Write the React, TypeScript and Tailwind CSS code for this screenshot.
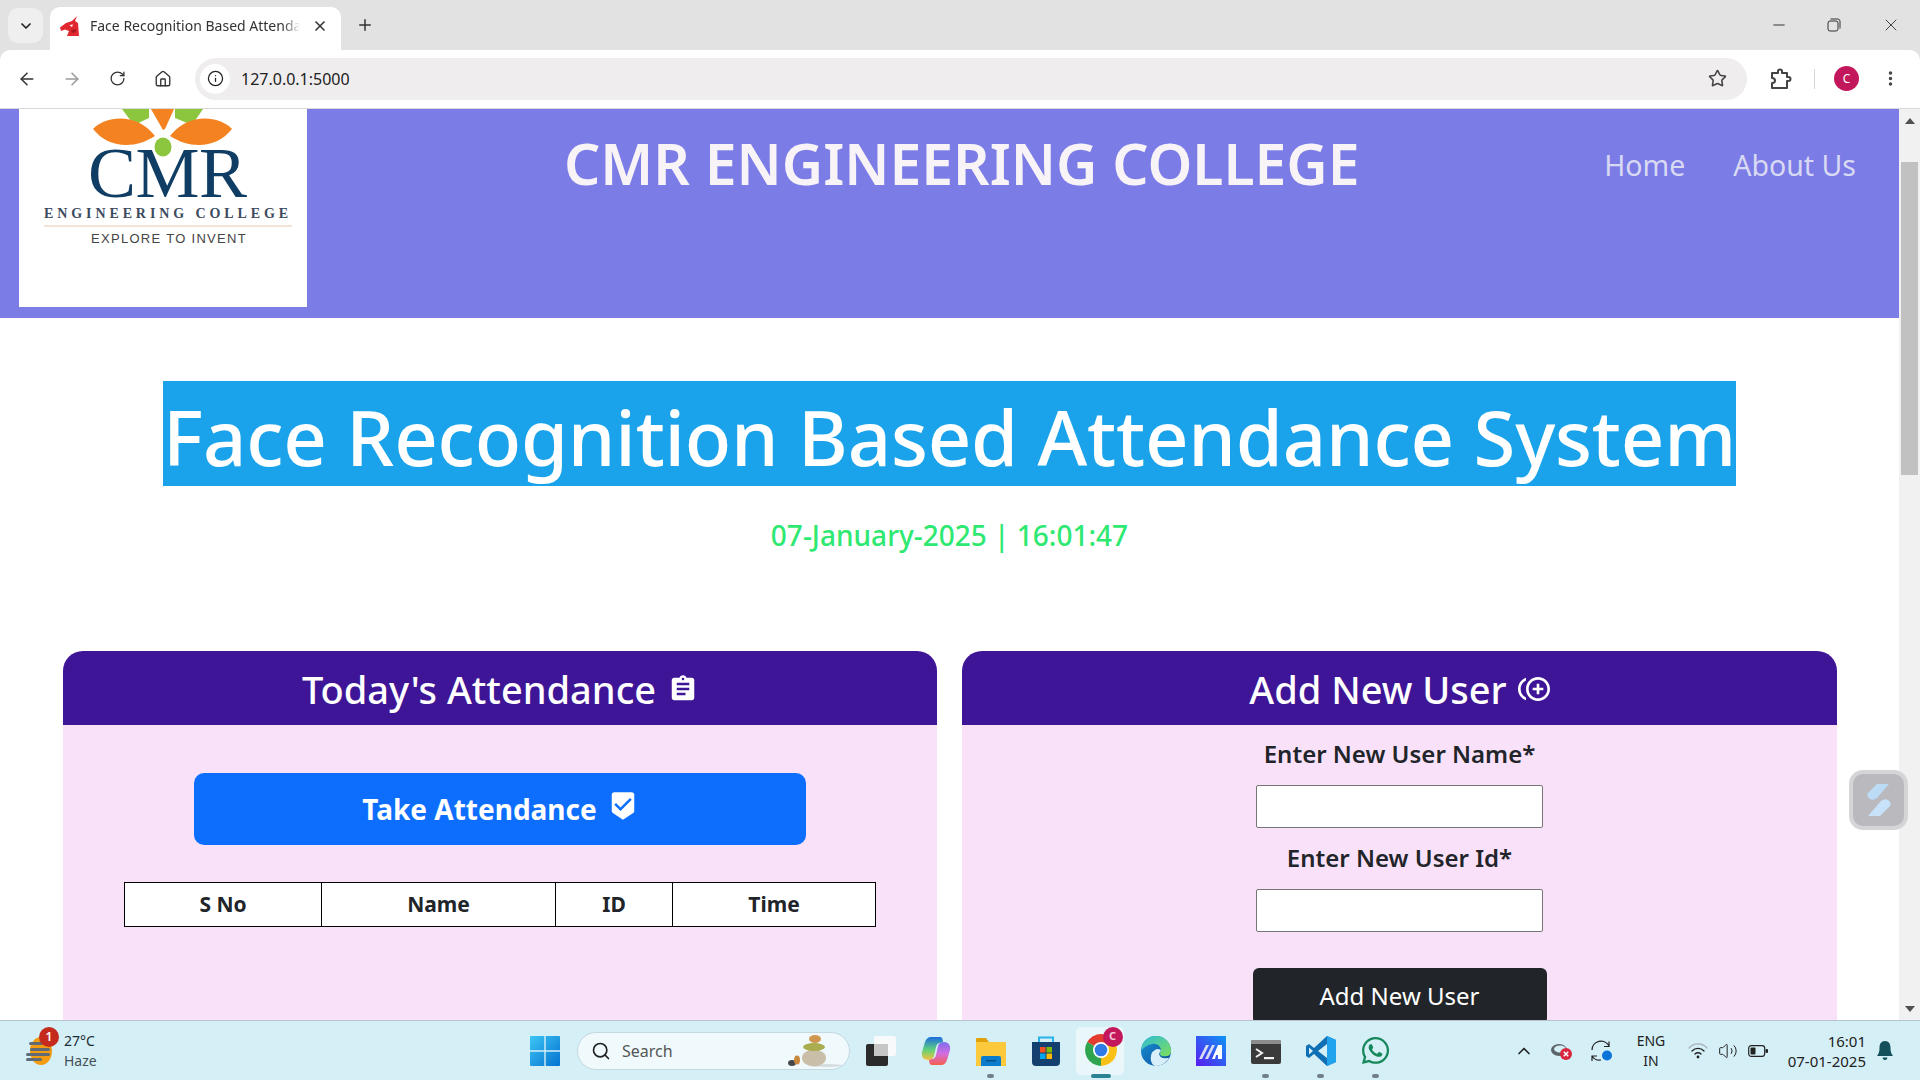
import { ArrowLeft, ArrowRight, RotateCw, Home, Info, Star, MoreVertical, X, Plus, ChevronDown, Minus, ChevronUp, Search, Volume2 } from "lucide-react";
import { MdAssignment, MdBeenhere, MdControlPointDuplicate } from "react-icons/md";
import { FaWhatsapp } from "react-icons/fa";

const sans = "font-['Noto_Sans','Open_Sans',sans-serif]";

const TabFavicon = () => (
  <svg width="20" height="20" viewBox="0 0 20 20">
    <path d="M17 0 L15 5 L18 7 L19 20 L7 20 L9 15 L5 13.5 L1 15 L0 11.5 L6 7 L12 5 Z" fill="#e0282e" />
    <path d="M9.5 9 L13 8.5 L12 11 Z" fill="#fff" />
    <path d="M11 14 L16 13 L16 16 L12 17 Z" fill="#a81a20" />
  </svg>
);

const ExtensionsIcon = () => (
  <svg width="22" height="22" viewBox="0 0 22 22" fill="none" stroke="#444" strokeWidth="2" strokeLinejoin="round">
    <path d="M2 5 H8 V3 Q8 1.5 10 1.5 Q12 1.5 12 3 V5 H17 V9 H18.5 Q20.5 9 20.5 11 Q20.5 13 18.5 13 H17 V20 H2 V15 Q5 15 5 12.5 Q5 10 2 10 Z" />
  </svg>
);

const BrowserChrome = () => (
  <div className="bg-[#e2e2e2] shrink-0">
    <div className="flex items-start h-[50px] pt-[7px]">
      <div className="ml-2 mt-px w-[35px] h-[35px] rounded-[10px] bg-[#efefef] flex items-center justify-center">
        <ChevronDown size={16} strokeWidth={2.5} color="#222" />
      </div>
      <div className="ml-[7px] w-[291px] h-[43px] bg-white rounded-t-[10px] flex items-center pl-[10px] pb-[6px]">
        <TabFavicon />
        <span className="ml-[10px] w-[210px] overflow-hidden whitespace-nowrap text-[14px] text-[#333] [mask-image:linear-gradient(to_right,black_92%,transparent)]">
          Face Recognition Based Attendance System
        </span>
        <X size={16} strokeWidth={2.5} color="#333" className="ml-[12px]" />
      </div>
      <Plus size={18} strokeWidth={2} color="#333" className="ml-[15px] mt-[9px]" />
      <div className="ml-auto flex items-center mt-[8px] text-[#222]">
        <Minus size={18} strokeWidth={1.2} className="mr-[39px]" />
        <svg width="14" height="14" viewBox="0 0 14 14" fill="none" stroke="#333" strokeWidth="1" className="mr-[40px]">
          <rect x="1" y="3" width="10" height="10" rx="2" />
          <path d="M3.5 1 H11 A2.5 2.5 0 0 1 13 3 V10.5" />
        </svg>
        <X size={20} strokeWidth={1} className="mr-[19px]" />
      </div>
    </div>
    <div className="h-[59px] bg-white rounded-t-[10px] border-b border-[#d9d9d9] flex items-center pb-px">
      <ArrowLeft size={20} strokeWidth={1.8} color="#333" className="ml-[17px]" />
      <ArrowRight size={20} strokeWidth={1.8} color="#9a9a9a" className="ml-[25px]" />
      <RotateCw size={17} strokeWidth={1.8} color="#333" className="ml-[27px]" />
      <Home size={18} strokeWidth={1.8} color="#333" className="ml-[28px]" />
      <div className="ml-[23px] w-[1552px] h-[42px] rounded-full bg-[#efedee] flex items-center pl-[5px] pr-[20px]">
        <div className="w-[30px] h-[30px] rounded-full bg-white flex items-center justify-center">
          <Info size={17} strokeWidth={1.8} color="#222" />
        </div>
        <span className="ml-[11px] text-[16px] text-[#222]">127.0.0.1:5000</span>
        <Star size={19} strokeWidth={2} color="#444" className="ml-auto" />
      </div>
      <div className="ml-[23px]"><ExtensionsIcon /></div>
      <div className="ml-[22px] w-px h-5 bg-[#d5d5d5]" />
      <div className="ml-[19px] w-[25px] h-[25px] rounded-full bg-[#c2185b] text-white text-[12px] flex items-center justify-center">C</div>
      <MoreVertical size={19} strokeWidth={2.4} color="#444" className="ml-[22px]" />
    </div>
  </div>
);

const CmrLogo = () => (
  <svg width="288" height="198" viewBox="0 0 288 198" className="block">
    <path d="M103 0 L130 0 L130 9 L115 16 Z" fill="#8cc63f" />
    <path d="M156 0 L184 0 L173 16 L156 9 Z" fill="#8cc63f" />
    <path d="M132 0 L155 0 L146 20 L144 21 Z" fill="#f58220" />
    <path d="M74 20 C88 6 118 4 136 27 C116 40 90 40 74 20 Z" fill="#f58220" />
    <path d="M213 20 C199 6 169 4 151 27 C171 40 197 40 213 20 Z" fill="#f58220" />
    <ellipse cx="144" cy="38" rx="8.5" ry="9.5" fill="#8cc63f" />
    <text x="69" y="88" fontFamily="'Liberation Serif', serif" fontSize="72" fill="#0f3d63" letterSpacing="-0.5">CMR</text>
    <text x="25" y="109" fontFamily="'Liberation Serif', serif" fontSize="14" fontWeight="700" fill="#3c4a5e" letterSpacing="3.9">ENGINEERING COLLEGE</text>
    <rect x="25" y="116" width="248" height="2" fill="#f5e3d3" />
    <text x="72" y="134" fontFamily="'Liberation Sans', sans-serif" fontSize="13" fill="#444" letterSpacing="1.3">EXPLORE TO INVENT</text>
  </svg>
);

const Header = () => (
  <div className={`h-[209px] shrink-0 bg-[#7b7ce6] flex items-start pl-[19px] pr-[43px] ${sans}`}>
    <div className="w-[288px] h-[198px] bg-white shrink-0">
      <CmrLogo />
    </div>
    <div className="ml-[257px] mt-[15px] text-[57px] leading-[78px] font-semibold text-[#f8f3f7] whitespace-nowrap">
      CMR ENGINEERING COLLEGE
    </div>
    <div className="ml-auto mt-[34px] flex gap-[48px] text-[28.5px] leading-[44px] text-[#d8d9f3]">
      <span>Home</span>
      <span>About Us</span>
    </div>
  </div>
);

const AttendanceCard = () => (
  <div className="w-[874px] shrink-0 flex flex-col bg-[#f9e2f9] rounded-t-[20px] overflow-hidden">
    <div className="h-[74px] pt-[2px] bg-[#3e1596] text-white flex items-center justify-center gap-[12px]">
      <span className="text-[38px] font-medium">Today's Attendance</span>
      <MdAssignment size={30} />
    </div>
    <div className="flex-1 flex flex-col items-center">
      <div className="mt-[48px] w-[612px] h-[72px] shrink-0 rounded-[10px] bg-[#0d6efd] text-white flex items-center justify-center gap-[11px]">
        <span className="text-[28px] font-bold">Take Attendance</span>
        <MdBeenhere size={30} className="-mt-[6px]" />
      </div>
      <table className="mt-[37px] w-[752px] h-[45px] table-fixed bg-white border-collapse text-[21px] font-bold text-[#212529]">
        <thead>
          <tr>
            <th className="w-[197px] border border-black font-bold">S No</th>
            <th className="w-[234px] border border-black font-bold">Name</th>
            <th className="w-[117px] border border-black font-bold">ID</th>
            <th className="border border-black font-bold">Time</th>
          </tr>
        </thead>
      </table>
    </div>
  </div>
);

const AddUserCard = () => (
  <div className="flex-1 flex flex-col bg-[#f9e2f9] rounded-t-[20px] overflow-hidden">
    <div className="h-[74px] pt-[2px] bg-[#3e1596] text-white flex items-center justify-center gap-[11px]">
      <span className="text-[38px] font-medium">Add New User</span>
      <MdControlPointDuplicate size={32} />
    </div>
    <div className="flex-1 flex flex-col items-center text-[#212529]">
      <label className="mt-[11px] h-[36px] leading-[36px] text-[24px] font-semibold">Enter New User Name*</label>
      <input className="mt-[13px] w-[287px] h-[43px] shrink-0 bg-white border border-[#767676] rounded-[2px]" />
      <label className="mt-[12px] h-[36px] leading-[36px] text-[24px] font-semibold">Enter New User Id*</label>
      <input className="mt-[13px] w-[287px] h-[43px] shrink-0 bg-white border border-[#767676] rounded-[2px]" />
      <button className="mt-[36px] w-[294px] h-[56px] shrink-0 rounded-[6px] bg-[#212529] text-white text-[24px]">Add New User</button>
    </div>
  </div>
);

const Scrollbar = () => (
  <div className="w-[21px] shrink-0 bg-[#f1f1f1] flex flex-col items-center">
    <svg width="10" height="6" viewBox="0 0 10 6" className="mt-[9px]"><path d="M0 6 L5 0 L10 6 Z" fill="#505050" /></svg>
    <div className="mt-[38px] w-[17px] h-[313px] bg-[#c1c1c1]" />
    <svg width="10" height="6" viewBox="0 0 10 6" className="mt-auto mb-[8px]"><path d="M0 0 L5 6 L10 0 Z" fill="#505050" /></svg>
  </div>
);

const Page = () => (
  <div className="flex-1 min-h-0 flex relative overflow-hidden bg-white">
    <div className={`flex-1 flex flex-col ${sans}`}>
      <Header />
      <div className="flex flex-col items-center shrink-0">
        <h1 className="mt-[63px] h-[105px] leading-[112px] bg-[#1aa3ea] text-white text-[76px] font-medium tracking-[-0.2px] whitespace-nowrap">
          Face Recognition Based Attendance System
        </h1>
        <div className="mt-[29px] text-[28px] leading-[40px] font-medium text-[#2fe871]">07-January-2025 | 16:01:47</div>
      </div>
      <div className="mt-[96px] flex-1 flex gap-[25px] pl-[63px] pr-[62px]">
        <AttendanceCard />
        <AddUserCard />
      </div>
    </div>
    <Scrollbar />
    <div className="absolute left-[1849px] top-[661px] w-[59px] h-[60px] rounded-[14px] bg-[#d5d5d8] p-[4px]">
      <div className="w-full h-full rounded-[10px] bg-[#b9b9be] flex items-center justify-center">
        <svg width="30" height="34" viewBox="0 0 30 34">
          <path d="M13 1 H25 L13 15 Q9 18 6 16 Q2 13 4 10 Z" fill="#bcdcf6" />
          <path d="M17 18 Q21 15 24 17 Q28 20 26 23 L16 33 H4 Z" fill="#c8e2f9" />
        </svg>
      </div>
    </div>
  </div>
);

const WeatherIcon = () => (
  <div className="relative w-[30px] h-[30px]">
    <svg width="30" height="30" viewBox="0 0 30 30">
      <ellipse cx="16" cy="15" rx="11" ry="14" fill="#f39c12" />
      <rect x="4" y="6" width="14" height="3" rx="1.5" fill="#5f6b75" />
      <rect x="5" y="12" width="20" height="3" rx="1.5" fill="#5f6b75" />
      <rect x="1" y="17" width="24" height="3" rx="1.5" fill="#5f6b75" />
      <rect x="1" y="22" width="16" height="3" rx="1.5" fill="#5f6b75" />
    </svg>
    <span className="absolute -top-[9px] left-[14px] w-[20px] h-[20px] rounded-full bg-[#c42b1c] text-white text-[12px] font-semibold flex items-center justify-center">1</span>
  </div>
);

const WinLogo = () => (
  <svg width="30" height="30" viewBox="0 0 30 30">
    <defs>
      <linearGradient id="win" x1="0" y1="0" x2="1" y2="1">
        <stop offset="0" stopColor="#3cc6f5" />
        <stop offset="1" stopColor="#0572d0" />
      </linearGradient>
    </defs>
    <path d="M0 1 a1 1 0 0 1 1 -1 H14.3 V14.3 H0 Z M15.7 0 H29 a1 1 0 0 1 1 1 V14.3 H15.7 Z M0 15.7 H14.3 V30 H1 a1 1 0 0 1 -1 -1 Z M15.7 15.7 H30 V29 a1 1 0 0 1 -1 1 H15.7 Z" fill="url(#win)" />
  </svg>
);

const Stones = () => (
  <svg width="56" height="38" viewBox="0 0 56 38">
    <ellipse cx="40" cy="33.5" rx="15" ry="1.5" fill="#d5dcdf" />
    <ellipse cx="5" cy="31" rx="4" ry="3" fill="#44474a" />
    <ellipse cx="10" cy="28" rx="3" ry="4.5" fill="#c8893f" />
    <ellipse cx="27" cy="26" rx="12" ry="8.5" fill="#c9bfa9" />
    <ellipse cx="27" cy="15" rx="11" ry="4" fill="#a9ad4e" />
    <ellipse cx="28" cy="7" rx="6" ry="4" fill="#cf9650" />
  </svg>
);

const TaskView = () => (
  <svg width="30" height="30" viewBox="0 0 30 30">
    <rect x="0" y="8" width="22" height="22" rx="2" fill="#2b2b2b" />
    <rect x="8" y="0" width="22" height="20" rx="2" fill="#f7f9fa" />
    <rect x="8" y="8" width="14" height="12" fill="#c6c6c6" />
  </svg>
);

const Copilot = () => (
  <svg width="30" height="30" viewBox="0 0 30 30">
    <defs>
      <linearGradient id="cop1" x1="0" y1="0" x2="0" y2="1">
        <stop offset="0" stopColor="#1d6ce0" />
        <stop offset="0.55" stopColor="#5fd27b" />
        <stop offset="1" stopColor="#f6c23c" />
      </linearGradient>
      <linearGradient id="cop2" x1="0" y1="0" x2="0" y2="1">
        <stop offset="0" stopColor="#7b6ff0" />
        <stop offset="0.5" stopColor="#d36ce0" />
        <stop offset="1" stopColor="#f5604c" />
      </linearGradient>
    </defs>
    <path d="M10 1 H19 C21 1 22 3 22 6 L19 7 C17 7 16 8 15 11 L13 20 C12 23 10 24 7 24 C3 24 0 21 1 16 L4 6 C5 3 7 1 10 1 Z" fill="url(#cop1)" />
    <path d="M20 29 H11 C9 29 8 27 8 24 L11 23 C13 23 14 22 15 19 L17 10 C18 7 20 6 23 6 C27 6 30 9 29 14 L26 24 C25 27 23 29 20 29 Z" fill="url(#cop2)" />
  </svg>
);

const Explorer = () => (
  <svg width="30" height="30" viewBox="0 0 30 30">
    <path d="M0 3 a1 1 0 0 1 1 -1 H10 L13 6 H30 V30 H0 Z" fill="#e0a008" />
    <rect x="0" y="6" width="30" height="24" fill="#fcc93c" />
    <path d="M5 22 a2 2 0 0 1 2 -2 H23 a2 2 0 0 1 2 2 V30 H5 Z" fill="#0a7ccb" />
    <rect x="10" y="24" width="10" height="1.5" fill="#054e86" />
  </svg>
);

const StoreIcon = () => (
  <svg width="30" height="30" viewBox="0 0 30 30">
    <path d="M8 6 V1.5 H22 V6" fill="none" stroke="#2ab2ea" strokeWidth="2" />
    <path d="M1 6 H29 V26 a4 4 0 0 1 -4 4 H5 a4 4 0 0 1 -4 -4 Z" fill="#14406f" />
    <rect x="9" y="11" width="5.5" height="5.5" fill="#f25022" />
    <rect x="15.5" y="11" width="5.5" height="5.5" fill="#7fba00" />
    <rect x="9" y="17.5" width="5.5" height="5.5" fill="#00a4ef" />
    <rect x="15.5" y="17.5" width="5.5" height="5.5" fill="#ffb900" />
  </svg>
);

const ChromeIcon = () => (
  <div className="relative w-[32px] h-[32px]">
    <svg width="32" height="32" viewBox="0 0 32 32">
      <path d="M16 16 L2.2 8 A16 16 0 0 1 29.8 8 Z" fill="#e33b2e" />
      <path d="M16 16 L29.8 8 A16 16 0 0 1 16 32 Z" fill="#f9c016" />
      <path d="M16 16 L16 32 A16 16 0 0 1 2.2 8 Z" fill="#2ea44f" />
      <circle cx="16" cy="16" r="8" fill="#fff" />
      <circle cx="16" cy="16" r="6.3" fill="#2f7ae5" />
    </svg>
    <span className="absolute -top-[7px] -right-[6px] w-[20px] h-[20px] rounded-full bg-[#c2185b] text-[#f6c9da] text-[11px] font-bold flex items-center justify-center">C</span>
  </div>
);

const EdgeIcon = () => (
  <svg width="30" height="30" viewBox="0 0 30 30">
    <defs>
      <linearGradient id="edg1" x1="0" y1="0" x2="1" y2="1">
        <stop offset="0" stopColor="#2dbcd6" />
        <stop offset="1" stopColor="#7fe05a" />
      </linearGradient>
      <linearGradient id="edg2" x1="0" y1="0" x2="1" y2="1">
        <stop offset="0" stopColor="#1b93d6" />
        <stop offset="1" stopColor="#0a4e9c" />
      </linearGradient>
    </defs>
    <circle cx="15" cy="15" r="15" fill="url(#edg2)" />
    <path d="M1 10 C3 3 9 0 15 0 C24 0 30 7 30 15 C30 20 25 21 21 20 C18 19 19 16 20 15 C20 10 16 7 11 8 C6 9 3 11 1 14 Z" fill="url(#edg1)" />
    <path d="M14 14 C16 12 20 13 20 15 C17 17 18 21 22 22 C25 22.5 27 22 28 22 C25 27 20 30 15 30 C11 30 9 24 10 20 C10 17 12 15 14 14 Z" fill="#d8eef8" />
  </svg>
);

const MaIcon = () => (
  <svg width="30" height="30" viewBox="0 0 30 30">
    <defs>
      <linearGradient id="ma" x1="1" y1="0" x2="0" y2="1">
        <stop offset="0" stopColor="#0d95f5" />
        <stop offset="1" stopColor="#5a1cf0" />
      </linearGradient>
    </defs>
    <rect width="30" height="30" fill="url(#ma)" />
    <path d="M3 23 L10 9 H13 L6 23 Z M9 23 L16 9 H19 L12 23 Z" fill="#d7dcf5" />
    <path d="M16 23 L22 9 H26 V23 H22 V19 H20 L19 23 Z" fill="#fff" />
  </svg>
);

const TerminalIcon = () => (
  <svg width="30" height="30" viewBox="0 0 30 30">
    <rect x="0" y="4" width="30" height="24" rx="2" fill="#3a3a3a" />
    <path d="M0 6 a2 2 0 0 1 2 -2 H28 a2 2 0 0 1 2 2 V8 H0 Z" fill="#8c8c8c" />
    <path d="M5 13 L11 17 L5 21" fill="none" stroke="#f2f2f2" strokeWidth="2" />
    <rect x="13" y="21" width="10" height="2.2" fill="#f2f2f2" />
  </svg>
);

const VsCode = () => (
  <svg width="30" height="30" viewBox="0 0 30 30">
    <path d="M21 0 L30 4 V26 L21 30 L8 18 L3 22 L0 20 V10 L3 8 L8 12 Z" fill="#0f6fb5" />
    <path d="M21 0 L30 4 V26 L21 30 Z" fill="#22a4ec" />
    <path d="M21 8 L12 15 L21 22 Z" fill="#d5eff7" />
    <path d="M3 11.5 V18.5 L7 15 Z" fill="#d5eff7" />
  </svg>
);

const AppSlot = ({ children, dot }: { children: React.ReactNode; dot?: boolean }) => (
  <div className="relative w-[55px] h-[60px] flex items-center justify-center">
    {children}
    {dot && <span className="absolute bottom-[3px] w-[7px] h-[4px] rounded-full bg-[#70808a]" />}
  </div>
);

const Taskbar = () => (
  <div className="h-[60px] shrink-0 bg-[#d5eff7] border-t border-[#b5c3cf] flex items-center font-['Noto_Sans',sans-serif] text-[#1c2b33]">
    <div className="ml-[25px] w-[30px]">
      <WeatherIcon />
    </div>
    <div className="ml-[9px] w-[60px] text-[14px] leading-[20px]">
      <div>27°C</div>
      <div className="text-[#444f56]">Haze</div>
    </div>
    <div className="ml-[406px]">
      <WinLogo />
    </div>
    <div className="ml-[17px] w-[273px] h-[38px] rounded-full bg-[#f0f9fc] border border-[#c5d8e0] flex items-center pl-[13px] pr-[6px]">
      <Search size={20} strokeWidth={2} color="#222" />
      <span className="ml-[11px] text-[16px] text-[#555]">Search</span>
      <div className="ml-auto">
        <Stones />
      </div>
    </div>
    <div className="ml-[3px] flex items-center">
      <AppSlot><TaskView /></AppSlot>
      <AppSlot><Copilot /></AppSlot>
      <AppSlot dot><Explorer /></AppSlot>
      <AppSlot><StoreIcon /></AppSlot>
      <div className="relative w-[55px] h-[60px] flex items-center justify-center">
        <div className="absolute left-[3px] top-[6px] w-[48px] h-[48px] rounded-[5px] bg-[#e9f7fb]" />
        <div className="relative -mt-[2px]"><ChromeIcon /></div>
        <span className="absolute bottom-[3px] w-[20px] h-[4px] rounded-full bg-[#2a8293]" />
      </div>
      <AppSlot><EdgeIcon /></AppSlot>
      <AppSlot><MaIcon /></AppSlot>
      <AppSlot dot><TerminalIcon /></AppSlot>
      <AppSlot dot><VsCode /></AppSlot>
      <AppSlot dot><FaWhatsapp size={31} color="#16875a" /></AppSlot>
    </div>
    <ChevronUp size={20} strokeWidth={2} color="#222" className="ml-[111px]" />
    <svg width="22" height="20" viewBox="0 0 22 20" className="ml-[17px]">
      <ellipse cx="8" cy="9" rx="8" ry="6" fill="#5d6468" />
      <ellipse cx="9" cy="8" rx="6" ry="3.5" fill="#d5eff7" />
      <circle cx="15" cy="13" r="6" fill="#d7263d" />
      <path d="M12.8 10.8 L17.2 15.2 M17.2 10.8 L12.8 15.2" stroke="#fff" strokeWidth="1.5" />
    </svg>
    <svg width="22" height="22" viewBox="0 0 22 22" className="ml-[18px]">
      <path d="M1 10 A9 9 0 0 1 18 6 M18 1.5 V6.5 H13" fill="none" stroke="#222" strokeWidth="1.2" />
      <path d="M1 21 V16 H6 M1 16 A9 9 0 0 0 10 20" fill="none" stroke="#222" strokeWidth="1.2" />
      <circle cx="16" cy="15.5" r="5" fill="#0a74da" />
    </svg>
    <div className="ml-[19px] w-[38px] text-center text-[14px] leading-[20px] text-[#222]">
      <div>ENG</div>
      <div>IN</div>
    </div>
    <svg width="20" height="18" viewBox="0 0 20 18" fill="none" strokeLinecap="round" className="ml-[18px]">
      <path d="M1 6 A12 12 0 0 1 19 6" stroke="#a4b1b7" strokeWidth="1.2" />
      <path d="M4 9 A8 8 0 0 1 16 9" stroke="#222" strokeWidth="1.3" />
      <path d="M7 12 A4.2 4.2 0 0 1 13 12" stroke="#222" strokeWidth="1.3" />
      <circle cx="10" cy="15" r="1.4" fill="#222" />
    </svg>
    <Volume2 size={20} strokeWidth={1.2} color="#222" className="ml-[10px]" />
    <svg width="20" height="14" viewBox="0 0 20 14" fill="none" className="ml-[10px]">
      <rect x="0.7" y="1.7" width="16" height="10.6" rx="2.5" stroke="#222" strokeWidth="1.2" />
      <rect x="2.5" y="3.5" width="5" height="7" rx="1" fill="#222" />
      <rect x="17.5" y="5" width="2.5" height="4" rx="1" fill="#222" />
    </svg>
    <div className="ml-auto text-right text-[15px] leading-[20px] text-[#222]">
      <div>16:01</div>
      <div>07-01-2025</div>
    </div>
    <svg width="16" height="20" viewBox="0 0 16 20" className="ml-[11px] mr-[27px]">
      <path d="M8 0 C12 0 13.5 3 13.5 7 C13.5 11 14.5 13 16 15 H0 C1.5 13 2.5 11 2.5 7 C2.5 3 4 0 8 0 Z" fill="#14505c" />
      <path d="M5.5 16.5 H10.5 C10 18.5 9 19 8 19 C7 19 6 18.5 5.5 16.5 Z" fill="#14505c" />
    </svg>
  </div>
);

export default function App() {
  return (
    <div className="w-[1920px] h-[1080px] flex flex-col overflow-hidden font-['Noto_Sans',sans-serif]">
      <BrowserChrome />
      <Page />
      <Taskbar />
    </div>
  );
}
